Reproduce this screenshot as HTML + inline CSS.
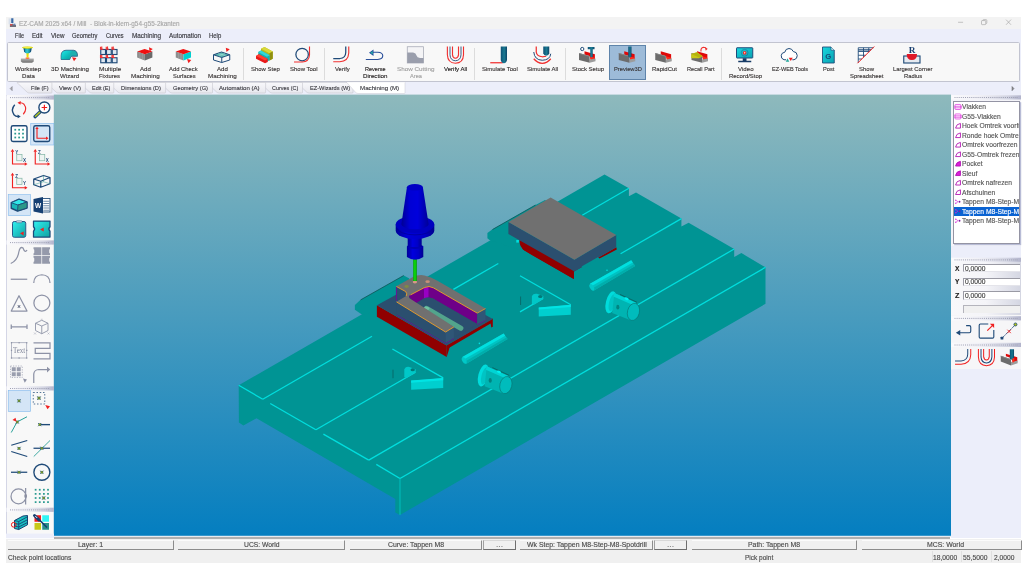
<!DOCTYPE html>
<html lang="en"><head><meta charset="utf-8"><title>EZ-CAM 2025 x64 / Mill - Blok-in-klem-g54-g55-2kanten</title>
<style>
html,body{margin:0;padding:0;background:#fff;}
body{width:1024px;height:576px;overflow:hidden;position:relative;font-family:"Liberation Sans",sans-serif;color:#222;}
#win{position:absolute;left:0;top:0;width:1024px;height:576px;}
.abs{position:absolute;}
.t{position:absolute;white-space:pre;line-height:1;transform-origin:0 50%;-webkit-text-stroke:0.13px currentColor;}
#title{position:absolute;left:6px;top:17px;width:1015px;height:12px;background:#f3f3f3;}
#menu{position:absolute;left:6px;top:29px;width:1015px;height:13px;background:#eceefa;}
#tbbg{position:absolute;left:6px;top:42px;width:1015px;height:40.5px;background:#eceefa;}
#tb{position:absolute;left:6.6px;top:42px;width:1013px;height:40.4px;background:#f8f8f8;border:0.8px solid #c2c4d0;border-radius:1.6px;box-sizing:border-box;}
#tabs{position:absolute;left:6px;top:82px;width:1015px;height:13px;background:#eceefa;}
#left{position:absolute;left:6px;top:95px;width:48px;height:443px;background:#f8f8f8;}
#right{position:absolute;left:951px;top:95px;width:70px;height:443px;background:#eceefa;}
#view{position:absolute;left:54px;top:95px;width:897px;height:440px;background:#eceefa;}
#vsh{position:absolute;left:54px;top:536.9px;width:895.8px;height:1.85px;background:#b0b0b0;}
#vgap{position:absolute;left:54px;top:535.8px;width:897px;height:1.1px;background:#e6eaf0;}
#st1{position:absolute;left:6px;top:538.7px;width:1015px;height:11.3px;background:#f0f0f0;}
#st2{position:absolute;left:6px;top:550px;width:1015px;height:12.5px;background:#f0f0f0;}
#txt{position:absolute;left:0;top:0;width:1024px;height:576px;will-change:transform;}

</style></head>
<body>
<div id="win">
<div id="title"></div>
<div id="menu"></div>
<div id="tbbg"></div>
<div id="tb"></div>
<div id="tabs"></div>
<div id="left"></div>
<div id="right"></div>
<div id="view"></div>
<div id="vgap"></div>
<div id="vsh"></div>
<div id="st1"></div>
<div id="st2"></div>

<svg id="scene" class="abs" style="left:53px;top:94px" width="899" height="443" viewBox="53 94 899 443">
<defs>
<linearGradient id="bgg" gradientUnits="userSpaceOnUse" x1="0" y1="94.6" x2="0" y2="535.8"><stop offset="0" stop-color="#8eb9bc"/><stop offset="1" stop-color="#047ec0"/></linearGradient>
<linearGradient id="blg" x1="0" x2="1" y1="0" y2="0"><stop offset="0" stop-color="#000098"/><stop offset="0.35" stop-color="#0000de"/><stop offset="0.7" stop-color="#0000c8"/><stop offset="1" stop-color="#000090"/></linearGradient>
<linearGradient id="blg2" x1="0" x2="1" y1="0" y2="0"><stop offset="0" stop-color="#000098"/><stop offset="0.3" stop-color="#0000d8"/><stop offset="0.75" stop-color="#0000c4"/><stop offset="1" stop-color="#000090"/></linearGradient>
<linearGradient id="coneg" x1="0" x2="1" y1="0" y2="0"><stop offset="0" stop-color="#000094"/><stop offset="0.3" stop-color="#0000d4"/><stop offset="0.6" stop-color="#0000dc"/><stop offset="1" stop-color="#000098"/></linearGradient>
<linearGradient id="toolg" x1="0" x2="1" y1="0" y2="0"><stop offset="0" stop-color="#00a800"/><stop offset="0.5" stop-color="#10e010"/><stop offset="1" stop-color="#009800"/></linearGradient>
<linearGradient id="rodg" gradientUnits="userSpaceOnUse" x1="0" y1="0" x2="3" y2="5.2" spreadMethod="pad"><stop offset="0" stop-color="#00c4c4"/><stop offset="1" stop-color="#00b0ae"/></linearGradient>
</defs>
<rect x="53.8" y="94.6" width="897.2" height="441.2" fill="url(#bgg)"/>
<polygon points="238.70,385.20 604.50,174.60 628.90,188.30 628.90,196.20 636.00,192.40 681.40,218.60 681.40,226.50 688.60,222.70 734.20,249.00 734.20,256.90 741.40,253.10 765.50,267.30 765.50,303.80 400.00,515.00 395.30,512.40 395.30,499.00 256.50,418.30 243.40,425.60 238.90,422.60" fill="#009494" />
<polygon points="362.20,314.70 354.90,309.80 354.90,305.00 360.30,300.00 403.70,275.50 409.00,278.20 420.00,300.00" fill="#009494" />
<line x1="360.60" y1="299.90" x2="403.70" y2="275.50" stroke="#0a4a4a" stroke-width="0.7" />
<polygon points="489.80,240.20 487.40,238.20 487.40,232.90 492.20,229.60 535.50,205.00 545.00,200.00 560.00,210.00 520.00,250.00" fill="#009494" />
<line x1="492.50" y1="229.50" x2="535.50" y2="205.00" stroke="#0a4a4a" stroke-width="0.7" />
<line x1="238.70" y1="385.20" x2="262.75" y2="399.25" stroke="#00dede" stroke-width="1.3" />
<line x1="270.25" y1="403.50" x2="315.90" y2="429.75" stroke="#00dede" stroke-width="1.3" />
<line x1="323.40" y1="434.10" x2="368.75" y2="460.10" stroke="#00dede" stroke-width="1.3" />
<line x1="376.30" y1="464.40" x2="400.00" y2="478.50" stroke="#00dede" stroke-width="1.3" />
<line x1="400.00" y1="478.50" x2="765.50" y2="267.30" stroke="#00dede" stroke-width="1.3" />
<line x1="400.00" y1="478.50" x2="400.00" y2="515.00" stroke="#00c4c2" stroke-width="0.9" />
<line x1="262.75" y1="399.25" x2="372.00" y2="336.31" stroke="#00dede" stroke-width="1.3" />
<line x1="453.40" y1="289.41" x2="498.30" y2="263.54" stroke="#00dede" stroke-width="1.3" />
<line x1="582.20" y1="215.21" x2="628.90" y2="188.30" stroke="#00dede" stroke-width="1.3" />
<line x1="315.90" y1="429.75" x2="415.50" y2="372.21" stroke="#00dede" stroke-width="1.3" />
<line x1="520.00" y1="311.84" x2="543.00" y2="298.55" stroke="#00dede" stroke-width="1.3" />
<line x1="620.60" y1="253.72" x2="681.40" y2="218.60" stroke="#00dede" stroke-width="1.3" />
<line x1="368.75" y1="460.10" x2="734.20" y2="249.00" stroke="#00dede" stroke-width="1.3" />
<line x1="520.00" y1="275.80" x2="570.80" y2="304.70" stroke="#00dede" stroke-width="1.3" />
<polygon points="538.75,307.40 556.00,306.20 570.80,304.70 570.80,314.80 538.75,316.60" fill="#00cfcf" />
<polygon points="538.75,307.40 570.80,304.70 570.80,307.00 538.75,309.60" fill="#00e4e4" />
<path d="M531.90,304.00 L531.90,296.00 Q533.50,293.00 537.00,293.80 L543.30,296.00 L543.30,299.00 L534.50,304.50 Z" fill="#00c8c8" stroke="none" stroke-width="1" />
<ellipse cx="540.30" cy="296.60" rx="2.2" ry="1.5" fill="#007a78"/>
<line x1="520.60" y1="296.50" x2="520.60" y2="305.00" stroke="#0a5a5a" stroke-width="0.7" />
<polygon points="590.00,283.80 631.20,260.20 635.20,265.90 593.60,290.70" fill="#00c2c2" />
<polygon points="590.00,283.80 631.20,260.20 632.80,262.50 591.40,286.30" fill="#00e0e0" />
<polygon points="592.40,288.60 634.00,264.30 635.20,265.90 593.60,290.70" fill="#00aeac" />
<ellipse cx="591.80" cy="287.30" rx="1.9" ry="3.6" transform="rotate(-30 591.80 287.30)" fill="#00c8c8"/>
<circle cx="607.00" cy="270.20" r="0.8" fill="#00e0e0"/>
<g transform="translate(0.00,0.00)"><ellipse cx="610.94" cy="302.34" rx="5.00" ry="11.25" transform="rotate(14 610.94 302.34)" fill="#00dcdc"/><ellipse cx="612.19" cy="302.81" rx="3.12" ry="8.75" transform="rotate(14 612.19 302.81)" fill="#00c4c4"/><path d="M614.38,293.12 L635.94,302.81 L639.06,311.25 L631.25,320.62 L612.19,313.12 Z" fill="#00b4b2"/><path d="M614.38,293.12 L635.94,302.81 L634.06,305.62 L613.44,296.56 Z" fill="#00d4d4"/><ellipse cx="633.44" cy="311.88" rx="5.94" ry="8.75" transform="rotate(14 633.44 311.88)" fill="#00bcbc" stroke="#0a6a68" stroke-width="0.5"/><path d="M620.00,294.38 L636.88,302.19" stroke="#0a5a58" stroke-width="0.7" fill="none"/><ellipse cx="617.81" cy="307.19" rx="1.56" ry="2.34" fill="#008482"/><ellipse cx="626.56" cy="298.75" rx="2.19" ry="1.25" transform="rotate(24 626.56 298.75)" fill="#00f0f0"/></g>
<line x1="392.40" y1="349.00" x2="443.20" y2="377.90" stroke="#00dede" stroke-width="1.3" />
<polygon points="411.15,380.60 428.40,379.40 443.20,377.90 443.20,388.00 411.15,389.80" fill="#00cfcf" />
<polygon points="411.15,380.60 443.20,377.90 443.20,380.20 411.15,382.80" fill="#00e4e4" />
<path d="M404.30,377.20 L404.30,369.20 Q405.90,366.20 409.40,367.00 L415.70,369.20 L415.70,372.20 L406.90,377.70 Z" fill="#00c8c8" stroke="none" stroke-width="1" />
<ellipse cx="412.70" cy="369.80" rx="2.2" ry="1.5" fill="#007a78"/>
<line x1="393.00" y1="369.70" x2="393.00" y2="378.20" stroke="#0a5a5a" stroke-width="0.7" />
<polygon points="462.40,357.00 503.60,333.40 507.60,339.10 466.00,363.90" fill="#00c2c2" />
<polygon points="462.40,357.00 503.60,333.40 505.20,335.70 463.80,359.50" fill="#00e0e0" />
<polygon points="464.80,361.80 506.40,337.50 507.60,339.10 466.00,363.90" fill="#00aeac" />
<ellipse cx="464.20" cy="360.50" rx="1.9" ry="3.6" transform="rotate(-30 464.20 360.50)" fill="#00c8c8"/>
<circle cx="479.40" cy="343.40" r="0.8" fill="#00e0e0"/>
<g transform="translate(-127.60,73.20)"><ellipse cx="610.94" cy="302.34" rx="5.00" ry="11.25" transform="rotate(14 610.94 302.34)" fill="#00dcdc"/><ellipse cx="612.19" cy="302.81" rx="3.12" ry="8.75" transform="rotate(14 612.19 302.81)" fill="#00c4c4"/><path d="M614.38,293.12 L635.94,302.81 L639.06,311.25 L631.25,320.62 L612.19,313.12 Z" fill="#00b4b2"/><path d="M614.38,293.12 L635.94,302.81 L634.06,305.62 L613.44,296.56 Z" fill="#00d4d4"/><ellipse cx="633.44" cy="311.88" rx="5.94" ry="8.75" transform="rotate(14 633.44 311.88)" fill="#00bcbc" stroke="#0a6a68" stroke-width="0.5"/><path d="M620.00,294.38 L636.88,302.19" stroke="#0a5a58" stroke-width="0.7" fill="none"/><ellipse cx="617.81" cy="307.19" rx="1.56" ry="2.34" fill="#008482"/><ellipse cx="626.56" cy="298.75" rx="2.19" ry="1.25" transform="rotate(24 626.56 298.75)" fill="#00f0f0"/></g>
<polygon points="520.00,241.20 573.80,271.60 616.30,247.20 616.80,249.50 599.50,258.60 598.00,257.20 581.50,266.50 573.80,271.20 573.80,279.00 531.00,254.50 523.00,249.50" fill="#900000" />
<path d="M519.6,240 Q518.8,246.5 524.5,250.5 L573.8,279 L573.8,268 Z" fill="#900000" stroke="none" stroke-width="1" />
<polygon points="508.40,221.90 574.40,259.70 616.25,235.00 616.25,247.20 574.40,271.40 508.40,233.90" fill="#2b4f6f" />
<polygon points="550.60,197.50 616.25,235.00 574.40,259.70 508.40,221.90" fill="#707070" />
<polygon points="581.50,266.60 598.20,257.00 598.20,259.50 584.00,268.00" fill="#009494" />
<rect x="516.3" y="240" width="2.6" height="2.6" fill="#00e0e0"/>
<polygon points="376.90,305.30 446.70,345.60 446.70,357.00 376.90,316.80" fill="#900000" />
<polygon points="446.70,345.20 492.80,318.60 492.80,326.80 491.30,327.40 490.60,323.40 446.70,349.20" fill="#900000" />
<polygon points="446.70,345.60 450.00,343.70 450.00,346.20 446.70,357.00" fill="#900000" />
<polygon points="376.90,305.30 396.50,294.50 440.00,290.00 492.80,319.00 446.70,345.60" fill="#2b4f6f" />
<line x1="397.00" y1="315.20" x2="445.60" y2="343.20" stroke="#7a00a0" stroke-width="0.8" />
<line x1="445.60" y1="343.20" x2="453.80" y2="338.40" stroke="#7a00a0" stroke-width="0.8" />
<line x1="477.20" y1="324.60" x2="485.50" y2="320.00" stroke="#7a00a0" stroke-width="0.8" />
<polygon points="396.25,286.25 421.00,290.00 421.00,302.00 396.25,302.30" fill="#2b4f6f" />
<polygon points="408.50,295.50 425.20,286.25 432.20,287.00 477.20,313.00 477.20,324.20 453.90,337.50 453.90,326.60" fill="#2b4f6f" />
<polygon points="427.00,286.40 432.20,287.00 477.20,313.00 477.20,324.00 432.50,298.20 427.00,297.20" fill="#6e0088" />
<path d="M423.5,288.2 Q425.5,286 428.5,286.6 L428.5,297.6 Q425.5,297.2 423.5,299 Z" fill="#9800c4" stroke="none" stroke-width="1" />
<polygon points="408.50,295.50 424.00,287.20 424.00,298.60 414.50,304.20" fill="#6e0088" />
<polygon points="414.50,304.20 424.00,298.60 428.50,297.60 432.50,298.20 477.20,324.00 477.20,324.20 453.90,337.50 453.90,326.80" fill="#2b4f6f" />
<line x1="426.6" y1="308.6" x2="460.8" y2="328.2" stroke="#52a48c" stroke-width="5.2" stroke-linecap="round"/>
<ellipse cx="426.8" cy="308.2" rx="2.8" ry="1.6" transform="rotate(12 426.8 308.2)" fill="#6fc2a4"/>
<polygon points="396.50,301.80 445.60,331.90 445.60,343.00 396.50,314.60" fill="#2b4f6f" />
<polygon points="445.60,331.90 453.90,326.80 453.90,338.00 445.60,343.00" fill="#2f5677" />
<polygon points="477.20,313.00 485.50,308.50 485.50,319.80 477.20,324.20" fill="#2f5677" />
<path d="M396.25,286.3 L412.5,277.3 Q418.5,274.2 424.5,275.4 Q431,276.6 437,280.6 L485.5,308.5 L477.2,313.0 L433.5,287.8 Q429,285.2 424.5,287.4 L410.5,294.8 Q408,296.4 409.5,298.2 L453.9,326.8 L445.6,331.9 L396.5,301.8 L406.2,296.0 Q407.6,293.8 405.6,291.5 Z" fill="#707070" stroke="none" stroke-width="1" />
<path d="M396.5,301.9 L445.6,332 L453.9,326.9" fill="none" stroke="#f0a028" stroke-width="0.9" />
<path d="M477.2,313.1 L433.5,287.9 Q429,285.3 424.5,287.5 L410.5,294.9" fill="none" stroke="#f0a028" stroke-width="0.9" />
<path d="M396.4,286.5 L405.6,291.5 Q407.6,293.8 406.2,296.0" fill="none" stroke="#f0a028" stroke-width="0.9" />
<line x1="396.40" y1="287.00" x2="396.40" y2="300.60" stroke="#7a00a0" stroke-width="0.8" />
<path d="M477.2,313.1 L485.5,308.6" fill="none" stroke="#f0a028" stroke-width="0.8" />
<ellipse cx="406.6" cy="286.5" rx="2.2" ry="1.4" fill="#7f8a46"/>
<ellipse cx="414.9" cy="282.1" rx="2.2" ry="1.4" fill="#d89a84"/>
<ellipse cx="427.6" cy="281.7" rx="2.2" ry="1.4" fill="#c89078"/>
<rect x="413.2" y="258" width="3.6" height="23" fill="url(#toolg)"/>
<path d="M406.9,246.5 L423.3,246.5 L423.3,257 Q415.1,262.5 406.9,257 Z" fill="url(#blg)"/>
<ellipse cx="415.1" cy="246.6" rx="8.2" ry="2.4" fill="#0000b4"/>
<rect x="407.7" y="236" width="14" height="11" fill="url(#blg)"/>
<path d="M395.7,224.5 L395.7,230.5 A19.3,8.6 0 0 0 434.3,230.5 L434.3,224.5 Z" fill="url(#blg2)"/>
<ellipse cx="415" cy="224.5" rx="19.3" ry="8.6" fill="#0000c0"/>
<path d="M396.2,228.2 A19.2,8.4 0 0 0 433.8,228.2" fill="none" stroke="#000098" stroke-width="0.8"/>
<path d="M406.9,187.4 L401.4,224 A13.6,5.2 0 0 0 428.6,224 L422.9,187.4 Z" fill="url(#coneg)"/>
<ellipse cx="414.9" cy="187.3" rx="8" ry="3.3" fill="#0000c4"/>
</svg>
<div class="abs" style="left:951.30px;top:95.00px;width:69.70px;height:151.00px;background:#f4f4f9;"></div>
<div class="abs" style="left:951.30px;top:257.50px;width:69.70px;height:111.00px;background:#f6f6f8;"></div>
<div class="abs" style="left:951.30px;top:262.00px;width:69.70px;height:53.00px;background:linear-gradient(90deg,#f8f8fa 0%,#f4f4f8 50%,#d4d6e2 100%);"></div>
<div class="abs" style="left:953.20px;top:101.20px;width:66.40px;height:142.60px;background:#fff;border:0.7px solid #9494a4;box-sizing:border-box;box-shadow:1.2px 1.2px 0 #b8bcd6;"></div>
<div class="abs" style="left:954.00px;top:206.90px;width:64.80px;height:9.40px;background:#0a63d2;"></div>
<div class="abs" style="left:962.60px;top:264.00px;width:57.60px;height:8.40px;background:#fff;border-top:0.7px solid #9a9aa4;border-left:0.7px solid #9a9aa4;border-bottom:0.5px solid #e4e4ea;box-sizing:border-box;"></div>
<div class="abs" style="left:962.60px;top:277.60px;width:57.60px;height:8.40px;background:#fff;border-top:0.7px solid #9a9aa4;border-left:0.7px solid #9a9aa4;border-bottom:0.5px solid #e4e4ea;box-sizing:border-box;"></div>
<div class="abs" style="left:962.60px;top:291.40px;width:57.60px;height:8.40px;background:#fff;border-top:0.7px solid #9a9aa4;border-left:0.7px solid #9a9aa4;border-bottom:0.5px solid #e4e4ea;box-sizing:border-box;"></div>
<div class="abs" style="left:962.60px;top:304.70px;width:57.60px;height:8.40px;background:#f0f0f0;border-top:0.8px solid #b4b4bc;border-left:0.8px solid #b4b4bc;box-sizing:border-box;"></div>
<svg class="abs" style="left:0;top:0" width="1024" height="576" viewBox="0 0 1024 576">
<defs>
<linearGradient id="gGrip2" x1="0" x2="1" y1="0" y2="0"><stop offset="0" stop-color="#fbfbfd"/><stop offset="0.4" stop-color="#f0f0f6"/><stop offset="0.8" stop-color="#d2d4e2"/><stop offset="1" stop-color="#b2b4cc"/></linearGradient>
<linearGradient id="gTool2" x1="0" x2="1" y1="0" y2="0"><stop offset="0" stop-color="#0d4f74"/><stop offset="0.55" stop-color="#1a7a92"/><stop offset="1" stop-color="#0b4468"/></linearGradient>
</defs>
<rect x="951.3" y="95.3" width="69.70000000000005" height="4.2" fill="url(#gGrip2)"/>
<line x1="954.5" y1="97.5" x2="1018" y2="97.5" stroke="#9496aa" stroke-width="0.9" stroke-dasharray="1 1.1"/>
<rect x="951.3" y="257.7" width="69.70000000000005" height="4.2" fill="url(#gGrip2)"/>
<line x1="954.5" y1="259.9" x2="1018" y2="259.9" stroke="#9496aa" stroke-width="0.9" stroke-dasharray="1 1.1"/>
<rect x="951.3" y="316.2" width="69.70000000000005" height="4.2" fill="url(#gGrip2)"/>
<line x1="954.5" y1="318.4" x2="1018" y2="318.4" stroke="#9496aa" stroke-width="0.9" stroke-dasharray="1 1.1"/>
<rect x="951.3" y="342.8" width="69.70000000000005" height="4.2" fill="url(#gGrip2)"/>
<line x1="954.5" y1="345" x2="1018" y2="345" stroke="#9496aa" stroke-width="0.9" stroke-dasharray="1 1.1"/>
<g transform="translate(928,90) scale(0.1875)"><rect x="144" y="77.0" width="31" height="27" rx="4" fill="#fff0ff" stroke="#d820d8" stroke-width="3.4"/><path d="M140,87.0 L182,87.0 M140,95.0 L182,95.0" stroke="#d820d8" stroke-width="3"/><rect x="144" y="127.6" width="31" height="27" rx="4" fill="#fff0ff" stroke="#d820d8" stroke-width="3.4"/><path d="M140,137.6 L182,137.6 M140,145.6 L182,145.6" stroke="#d820d8" stroke-width="3"/><path d="M147,203.2 Q150,181.2 173,178.2 L173,203.2 Z" fill="#fff" stroke="#b010b0" stroke-width="4.6" stroke-linejoin="round"/><path d="M147,253.8 Q150,231.8 173,228.8 L173,253.8 Z" fill="#fff" stroke="#b010b0" stroke-width="4.6" stroke-linejoin="round"/><path d="M147,304.4 Q150,282.4 173,279.4 L173,304.4 Z" fill="#fff" stroke="#b010b0" stroke-width="4.6" stroke-linejoin="round"/><path d="M147,355.0 Q150,333.0 173,330.0 L173,355.0 Z" fill="#fff" stroke="#b010b0" stroke-width="4.6" stroke-linejoin="round"/><path d="M147,506.8 Q150,484.8 173,481.8 L173,506.8 Z" fill="#fff" stroke="#b010b0" stroke-width="4.6" stroke-linejoin="round"/><path d="M147,557.4000000000001 Q150,535.4000000000001 173,532.4000000000001 L173,557.4000000000001 Z" fill="#fff" stroke="#b010b0" stroke-width="4.6" stroke-linejoin="round"/><path d="M147,405.6 Q150,383.6 173,380.6 L173,405.6 Z" fill="#d820d8" stroke="#b010b0" stroke-width="4.6" stroke-linejoin="round"/><path d="M147,456.2 Q150,434.2 173,431.2 L173,456.2 Z" fill="#d820d8" stroke="#b010b0" stroke-width="4.6" stroke-linejoin="round"/><circle cx="148" cy="588.0" r="3.5" fill="#d820d8"/><circle cx="148" cy="604.0" r="3.5" fill="#d820d8"/><path d="M150,589.0 L160,596.0 L150,603.0" fill="none" stroke="#d820d8" stroke-width="3"/><circle cx="168" cy="596.0" r="5" fill="#8018a0"/><circle cx="148" cy="638.6" r="3.5" fill="#d820d8"/><circle cx="148" cy="654.6" r="3.5" fill="#d820d8"/><path d="M150,639.6 L160,646.6 L150,653.6" fill="none" stroke="#d820d8" stroke-width="3"/><circle cx="168" cy="646.6" r="5" fill="#8018a0"/><circle cx="148" cy="689.2" r="3.5" fill="#d820d8"/><circle cx="148" cy="705.2" r="3.5" fill="#d820d8"/><path d="M150,690.2 L160,697.2 L150,704.2" fill="none" stroke="#d820d8" stroke-width="3"/><circle cx="168" cy="697.2" r="5" fill="#8018a0"/></g>
<g transform="translate(948,314) scale(0.10066438494060802)"><path d="M180,116 L212,116 Q226,116 226,130 L226,172 Q226,186 212,186 L118,186" fill="none" stroke="#1f4a78" stroke-width="11"/><path d="M78,186 L122,158 L122,214 Z" fill="#1f4a78"/><path d="M400,100 L322,100 Q310,100 310,112 L310,228 Q310,240 322,240 L443,240 Q455,240 455,228 L455,160" fill="none" stroke="#1f4a78" stroke-width="11"/><path d="M390,166 L446,110" stroke="#f02020" stroke-width="11"/><path d="M416,98 L458,98 L458,140 Z" fill="#f02020"/><path d="M536,240 L668,108" stroke="#1f4a78" stroke-width="8" stroke-dasharray="40 8"/><rect x="522" y="226" width="28" height="28" rx="6" fill="#1f4a78"/><circle cx="670" cy="104" r="15" fill="#b8c818" stroke="#1f4a78" stroke-width="8"/><path d="M590,156 L624,190 M624,156 L590,190" stroke="#f02020" stroke-width="9"/><path d="M196,348 L196,400 Q194,462 130,466 L70,466" fill="none" stroke="#1f4a78" stroke-width="10"/><path d="M226,348 L226,404 Q222,494 130,498 L70,498" fill="none" stroke="#f02020" stroke-width="10"/><path d="M302,348 L302,428 Q306,512 382,514 Q458,512 462,428 L462,348" fill="none" stroke="#f02020" stroke-width="10"/><path d="M328,348 L328,426 Q332,484 382,486 Q432,484 436,426 L436,348" fill="none" stroke="#1f4a78" stroke-width="10"/><path d="M354,348 L354,424 Q358,456 382,458 Q406,456 410,424 L410,348" fill="none" stroke="#f02020" stroke-width="10"/><path d="M575,394 L688,430 L688,472 L642,484 L634,440 L575,420 Z" fill="#e00808"/><path d="M625,478 L692,462 L692,490 L625,512 Z" fill="#9c9c9c"/><path d="M614,350 L656,350 L656,446 Q635,462 614,446 Z" fill="url(#gTool2)"/><path d="M524,414 L626,450 L626,512 L524,472 Z" fill="#6c6c6c"/><path d="M524,414 L626,450 L626,458 L524,422 Z" fill="#8a8a8a"/><path d="M640,440 L660,436 L660,474 L642,484 Z" fill="#ff2a1a"/></g>
<rect x="8.6" y="18.4" width="2.6" height="5.8" fill="#d2dcea" opacity="0.8"/><path d="M11.2,18.2 L13.4,18.2 L13.4,22.2 L12.3,23.6 L11.2,22.2 Z" fill="#3868a6"/><path d="M9.9,24.2 L12.6,24.0 L16.0,25.0 L16.0,26.9 L9.9,26.9 Z" fill="#6e707c"/><rect x="10.1" y="24.0" width="2.2" height="1.5" fill="#d84848"/><rect x="13.6" y="23.6" width="1.8" height="1.5" fill="#6a86b8"/>
<g transform="translate(944,14) scale(0.078125)"><path d="M180,106 L244,106" stroke="#a2a2a2" stroke-width="8"/><rect x="480" y="84" width="54" height="52" rx="8" fill="none" stroke="#a2a2a2" stroke-width="8"/><path d="M496,82 Q498,72 508,72 L538,72 Q548,72 548,82 L548,112 Q548,122 538,124" fill="none" stroke="#a2a2a2" stroke-width="8"/><path d="M794,72 L858,138 M858,72 L794,138" stroke="#a2a2a2" stroke-width="8"/></g>
</svg>
<div class="abs" style="left:608.75px;top:45.25px;width:37.50px;height:35.00px;background:#9dbbd8;border:0.6px solid #5f84aa;box-sizing:border-box;"></div>
<div class="abs" style="left:243.20px;top:47.50px;width:0.80px;height:32.00px;background:#dcdcdc;"></div>
<div class="abs" style="left:323.60px;top:47.50px;width:0.80px;height:32.00px;background:#dcdcdc;"></div>
<div class="abs" style="left:474.00px;top:47.50px;width:0.80px;height:32.00px;background:#dcdcdc;"></div>
<div class="abs" style="left:564.85px;top:47.50px;width:0.80px;height:32.00px;background:#dcdcdc;"></div>
<div class="abs" style="left:720.85px;top:47.50px;width:0.80px;height:32.00px;background:#dcdcdc;"></div>
<div class="abs" style="left:8.00px;top:539.60px;width:165.70px;height:10.10px;background:#f0f0f0;border-right:0.9px solid #8c8c8c;border-bottom:0.9px solid #8c8c8c;border-top:0.5px solid #fbfbfb;box-sizing:border-box;"></div>
<div class="abs" style="left:177.50px;top:539.60px;width:167.10px;height:10.10px;background:#f0f0f0;border-right:0.9px solid #8c8c8c;border-bottom:0.9px solid #8c8c8c;border-top:0.5px solid #fbfbfb;box-sizing:border-box;"></div>
<div class="abs" style="left:349.80px;top:539.60px;width:132.50px;height:10.10px;background:#f0f0f0;border-right:0.9px solid #8c8c8c;border-bottom:0.9px solid #8c8c8c;border-top:0.5px solid #fbfbfb;box-sizing:border-box;"></div>
<div class="abs" style="left:482.80px;top:539.80px;width:32.80px;height:9.80px;background:#f0f0f0;border-right:1px solid #6e6e6e;border-bottom:1px solid #6e6e6e;border-top:0.6px solid #d8d8d8;border-left:0.6px solid #a0a0a0;box-sizing:border-box;"></div>
<div class="abs" style="left:520.30px;top:539.60px;width:133.00px;height:10.10px;background:#f0f0f0;border-right:0.9px solid #8c8c8c;border-bottom:0.9px solid #8c8c8c;border-top:0.5px solid #fbfbfb;box-sizing:border-box;"></div>
<div class="abs" style="left:653.50px;top:539.80px;width:33.50px;height:9.80px;background:#f0f0f0;border-right:1px solid #6e6e6e;border-bottom:1px solid #6e6e6e;border-top:0.6px solid #d8d8d8;border-left:0.6px solid #a0a0a0;box-sizing:border-box;"></div>
<div class="abs" style="left:691.90px;top:539.60px;width:165.50px;height:10.10px;background:#f0f0f0;border-right:0.9px solid #8c8c8c;border-bottom:0.9px solid #8c8c8c;border-top:0.5px solid #fbfbfb;box-sizing:border-box;"></div>
<div class="abs" style="left:862.40px;top:539.60px;width:159.60px;height:10.10px;background:#f0f0f0;border-right:0.9px solid #8c8c8c;border-bottom:0.9px solid #8c8c8c;border-top:0.5px solid #fbfbfb;box-sizing:border-box;"></div>
<div class="abs" style="left:931.60px;top:550.50px;width:0.70px;height:11.50px;background:#e0e0e0;"></div>
<div class="abs" style="left:961.30px;top:550.50px;width:0.70px;height:11.50px;background:#e0e0e0;"></div>
<div class="abs" style="left:991.30px;top:550.50px;width:0.70px;height:11.50px;background:#e0e0e0;"></div>
<svg class="abs" style="left:0;top:82px" width="1024" height="14" viewBox="0 82 1024 14">
<defs><linearGradient id="gTab" x1="0" x2="0" y1="0" y2="1"><stop offset="0" stop-color="#f8f8fb"/><stop offset="1" stop-color="#e8e8ee"/></linearGradient></defs>
<path d="M296.50,82.5 L306.80,92.2 Q307.70,93.0 309.10,93.0 L352.40,93.0 Q353.00,93.0 353.00,92.4 L353.00,82.5 Z" fill="url(#gTab)" stroke="#c4c4cc" stroke-width="0.55" stroke-linejoin="round"/>
<path d="M259.60,82.5 L269.90,92.2 Q270.80,93.0 272.20,93.0 L301.90,93.0 Q302.50,93.0 302.50,92.4 L302.50,82.5 Z" fill="url(#gTab)" stroke="#c4c4cc" stroke-width="0.55" stroke-linejoin="round"/>
<path d="M206.50,82.5 L216.80,92.2 Q217.70,93.0 219.10,93.0 L265.00,93.0 Q265.60,93.0 265.60,92.4 L265.60,82.5 Z" fill="url(#gTab)" stroke="#c4c4cc" stroke-width="0.55" stroke-linejoin="round"/>
<path d="M159.60,82.5 L169.90,92.2 Q170.80,93.0 172.20,93.0 L211.90,93.0 Q212.50,93.0 212.50,92.4 L212.50,82.5 Z" fill="url(#gTab)" stroke="#c4c4cc" stroke-width="0.55" stroke-linejoin="round"/>
<path d="M107.75,82.5 L118.05,92.2 Q118.95,93.0 120.35,93.0 L165.00,93.0 Q165.60,93.0 165.60,92.4 L165.60,82.5 Z" fill="url(#gTab)" stroke="#c4c4cc" stroke-width="0.55" stroke-linejoin="round"/>
<path d="M79.40,82.5 L89.70,92.2 Q90.60,93.0 92.00,93.0 L113.15,93.0 Q113.75,93.0 113.75,92.4 L113.75,82.5 Z" fill="url(#gTab)" stroke="#c4c4cc" stroke-width="0.55" stroke-linejoin="round"/>
<path d="M45.90,82.5 L56.20,92.2 Q57.10,93.0 58.50,93.0 L84.80,93.0 Q85.40,93.0 85.40,92.4 L85.40,82.5 Z" fill="url(#gTab)" stroke="#c4c4cc" stroke-width="0.55" stroke-linejoin="round"/>
<path d="M16.90,82.5 L27.20,92.2 Q28.10,93.0 29.50,93.0 L51.30,93.0 Q51.90,93.0 51.90,92.4 L51.90,82.5 Z" fill="url(#gTab)" stroke="#c4c4cc" stroke-width="0.55" stroke-linejoin="round"/>
<path d="M346.50,82.2 L355.60,92.4 Q356.70,93.5 358.10,93.5 L404.40,93.5 Q405.00,93.5 405.00,92.9 L405.00,82.2 Z" fill="#ffffff" stroke="#c8c8d0" stroke-width="0.5" stroke-linejoin="round"/>
<rect x="347.10" y="81.6" width="57.70" height="1.2" fill="#fdfdfe"/>
<path d="M12.2,86.5 L10.1,88.6 L12.2,90.7 Z" fill="#a8a8ac" stroke="#707078" stroke-width="0.45"/>
<path d="M1012.0,86.5 L1014.0,88.6 L1012.0,90.7 Z" fill="#909094" stroke="#505056" stroke-width="0.45"/>
</svg>
<div id="txt">
<span class="t" style="left:18.75px;top:21px;font-size:6.5px;transform:scaleX(0.9838);color:#a6a6a6;">EZ-CAM 2025 x64 / Mill  - Blok-in-klem-g54-g55-2kanten</span>
<span class="t" style="left:14.75px;top:33px;font-size:6.3px;transform:scaleX(0.8862);color:#34343a;">File</span>
<span class="t" style="left:32.25px;top:33px;font-size:6.3px;transform:scaleX(0.9669);color:#34343a;">Edit</span>
<span class="t" style="left:50.60px;top:33px;font-size:6.3px;transform:scaleX(0.9892);color:#34343a;">View</span>
<span class="t" style="left:72.25px;top:33px;font-size:6.3px;transform:scaleX(0.9220);color:#34343a;">Geometry</span>
<span class="t" style="left:106.00px;top:33px;font-size:6.3px;transform:scaleX(0.8821);color:#34343a;">Curves</span>
<span class="t" style="left:131.90px;top:33px;font-size:6.3px;transform:scaleX(1.0103);color:#34343a;">Machining</span>
<span class="t" style="left:169.10px;top:33px;font-size:6.3px;transform:scaleX(1.0013);color:#34343a;">Automation</span>
<span class="t" style="left:209.00px;top:33px;font-size:6.3px;transform:scaleX(0.9457);color:#34343a;">Help</span>
<span class="t" style="left:14.75px;top:66px;font-size:6.2px;transform:scaleX(1.0084);color:#383434;">Workstep</span>
<span class="t" style="left:21.50px;top:73px;font-size:6.2px;transform:scaleX(0.9864);color:#383434;">Data</span>
<span class="t" style="left:51.00px;top:66px;font-size:6.2px;transform:scaleX(1.0041);color:#383434;">3D Machining</span>
<span class="t" style="left:60.25px;top:73px;font-size:6.2px;transform:scaleX(0.9940);color:#383434;">Wizard</span>
<span class="t" style="left:98.75px;top:66px;font-size:6.2px;transform:scaleX(1.0432);color:#383434;">Multiple</span>
<span class="t" style="left:99.40px;top:73px;font-size:6.2px;transform:scaleX(0.9471);color:#383434;">Fixtures</span>
<span class="t" style="left:139.75px;top:66px;font-size:6.2px;transform:scaleX(0.9850);color:#383434;">Add</span>
<span class="t" style="left:131.00px;top:73px;font-size:6.2px;transform:scaleX(1.0188);color:#383434;">Machining</span>
<span class="t" style="left:169.40px;top:66px;font-size:6.2px;transform:scaleX(0.9478);color:#383434;">Add Check</span>
<span class="t" style="left:172.50px;top:73px;font-size:6.2px;transform:scaleX(0.9213);color:#383434;">Surfaces</span>
<span class="t" style="left:216.90px;top:66px;font-size:6.2px;transform:scaleX(0.9850);color:#383434;">Add</span>
<span class="t" style="left:208.10px;top:73px;font-size:6.2px;transform:scaleX(1.0206);color:#383434;">Machining</span>
<span class="t" style="left:251.00px;top:66px;font-size:6.2px;transform:scaleX(0.9603);color:#383434;">Show Step</span>
<span class="t" style="left:289.75px;top:66px;font-size:6.2px;transform:scaleX(0.9670);color:#383434;">Show Tool</span>
<span class="t" style="left:335.00px;top:66px;font-size:6.2px;transform:scaleX(0.9526);color:#383434;">Verify</span>
<span class="t" style="left:365.00px;top:66px;font-size:6.2px;transform:scaleX(0.8938);color:#242020;">Reverse</span>
<span class="t" style="left:363.10px;top:73px;font-size:6.2px;transform:scaleX(0.9991);color:#242020;">Direction</span>
<span class="t" style="left:444.40px;top:66px;font-size:6.2px;transform:scaleX(0.9733);color:#242020;">Verify All</span>
<span class="t" style="left:481.50px;top:66px;font-size:6.2px;transform:scaleX(0.9654);color:#383434;">Simulate Tool</span>
<span class="t" style="left:527.25px;top:66px;font-size:6.2px;transform:scaleX(0.9667);color:#383434;">Simulate All</span>
<span class="t" style="left:572.25px;top:66px;font-size:6.2px;transform:scaleX(0.9633);color:#383434;">Stock Setup</span>
<span class="t" style="left:614.00px;top:66px;font-size:6.2px;transform:scaleX(0.9324);color:#383434;">Preview3D</span>
<span class="t" style="left:651.90px;top:66px;font-size:6.2px;transform:scaleX(0.9691);color:#383434;">RapidCut</span>
<span class="t" style="left:686.90px;top:66px;font-size:6.2px;transform:scaleX(0.9086);color:#383434;">Recall Part</span>
<span class="t" style="left:737.50px;top:66px;font-size:6.2px;transform:scaleX(0.9924);color:#383434;">Video</span>
<span class="t" style="left:728.75px;top:73px;font-size:6.2px;transform:scaleX(0.9635);color:#383434;">Record/Stop</span>
<span class="t" style="left:771.90px;top:66px;font-size:6.2px;transform:scaleX(0.8972);color:#383434;">EZ-WEB Tools</span>
<span class="t" style="left:823.10px;top:66px;font-size:6.2px;transform:scaleX(0.9120);color:#383434;">Post</span>
<span class="t" style="left:859.00px;top:66px;font-size:6.2px;transform:scaleX(0.9687);color:#383434;">Show</span>
<span class="t" style="left:849.75px;top:73px;font-size:6.2px;transform:scaleX(0.9503);color:#383434;">Spreadsheet</span>
<span class="t" style="left:893.10px;top:66px;font-size:6.2px;transform:scaleX(0.9544);color:#383434;">Largest Corner</span>
<span class="t" style="left:903.75px;top:73px;font-size:6.2px;transform:scaleX(0.9421);color:#383434;">Radius</span>
<span class="t" style="left:397.25px;top:66px;font-size:6.2px;transform:scaleX(1.0187);color:#a2a2a2;">Show Cutting</span>
<span class="t" style="left:410.00px;top:73px;font-size:6.2px;transform:scaleX(0.9099);color:#a2a2a2;">Area</span>
<span class="t" style="left:31.00px;top:85px;font-size:6.2px;transform:scaleX(0.8931);color:#3a3a40;">File (F)</span>
<span class="t" style="left:59.00px;top:85px;font-size:6.2px;transform:scaleX(0.9450);color:#3a3a40;">View (V)</span>
<span class="t" style="left:91.60px;top:85px;font-size:6.2px;transform:scaleX(0.8914);color:#3a3a40;">Edit (E)</span>
<span class="t" style="left:121.00px;top:85px;font-size:6.2px;transform:scaleX(0.9381);color:#3a3a40;">Dimensions (D)</span>
<span class="t" style="left:173.00px;top:85px;font-size:6.2px;transform:scaleX(0.9252);color:#3a3a40;">Geometry (G)</span>
<span class="t" style="left:219.40px;top:85px;font-size:6.2px;transform:scaleX(0.9835);color:#3a3a40;">Automation (A)</span>
<span class="t" style="left:271.90px;top:85px;font-size:6.2px;transform:scaleX(0.8756);color:#3a3a40;">Curves (C)</span>
<span class="t" style="left:309.75px;top:85px;font-size:6.2px;transform:scaleX(0.9148);color:#3a3a40;">EZ-Wizards (W)</span>
<span class="t" style="left:360.25px;top:85px;font-size:6.2px;transform:scaleX(0.9986);color:#3a3a40;">Machining (M)</span>
<span class="t" style="left:78.25px;top:542px;font-size:6.6px;transform:scaleX(1.0555);color:#4a4a4a;">Layer: 1</span>
<span class="t" style="left:243.80px;top:542px;font-size:6.6px;transform:scaleX(1.0263);color:#4a4a4a;">UCS: World</span>
<span class="t" style="left:387.80px;top:542px;font-size:6.6px;transform:scaleX(1.0453);color:#4a4a4a;">Curve: Tappen M8</span>
<span class="t" style="left:495.50px;top:542px;font-size:6.6px;transform:scaleX(1.2727);color:#666;">...</span>
<span class="t" style="left:526.80px;top:542px;font-size:6.6px;transform:scaleX(1.0480);color:#4a4a4a;">Wk Step: Tappen M8-Step-M8-Spotdrill</span>
<span class="t" style="left:667.00px;top:542px;font-size:6.6px;transform:scaleX(1.2727);color:#666;">...</span>
<span class="t" style="left:747.50px;top:542px;font-size:6.6px;transform:scaleX(1.0456);color:#4a4a4a;">Path: Tappen M8</span>
<span class="t" style="left:926.60px;top:542px;font-size:6.6px;transform:scaleX(1.0446);color:#4a4a4a;">MCS: World</span>
<span class="t" style="left:8.10px;top:555px;font-size:6.6px;transform:scaleX(1.0114);color:#4a4a4a;">Check point locations</span>
<span class="t" style="left:744.80px;top:555px;font-size:6.6px;transform:scaleX(0.9862);color:#4a4a4a;">Pick point</span>
<span class="t" style="left:933.40px;top:555px;font-size:6.6px;transform:scaleX(1.0149);color:#4a4a4a;">18,0000</span>
<span class="t" style="left:963.40px;top:555px;font-size:6.6px;transform:scaleX(1.0233);color:#4a4a4a;">55,5000</span>
<span class="t" style="left:993.60px;top:555px;font-size:6.6px;transform:scaleX(1.0113);color:#4a4a4a;">2,0000</span>
<span class="t" style="left:954.80px;top:266px;font-size:6.6px;transform:scaleX(0.9986);color:#222;font-weight:bold;">X</span>
<span class="t" style="left:964.60px;top:266px;font-size:6.6px;transform:scaleX(1.0113);color:#3c3c3c;">0,0000</span>
<span class="t" style="left:954.80px;top:279px;font-size:6.6px;transform:scaleX(0.9986);color:#222;font-weight:bold;">Y</span>
<span class="t" style="left:964.60px;top:279px;font-size:6.6px;transform:scaleX(1.0113);color:#3c3c3c;">0,0000</span>
<span class="t" style="left:954.80px;top:293px;font-size:6.6px;transform:scaleX(1.0915);color:#222;font-weight:bold;">Z</span>
<span class="t" style="left:964.60px;top:293px;font-size:6.6px;transform:scaleX(1.0113);color:#3c3c3c;">0,0000</span>
<div class="abs" id="lst" style="left:954px;top:102px;width:64.8px;height:141px;overflow:hidden;">
<span class="t" style="left:8.1px;top:2px;font-size:6.6px;transform:scaleX(1.0180);color:#555;">Vlakken</span>
<span class="t" style="left:8.1px;top:12px;font-size:6.6px;transform:scaleX(1.0180);color:#555;">G55-Vlakken</span>
<span class="t" style="left:8.1px;top:21px;font-size:6.6px;transform:scaleX(1.0180);color:#555;">Hoek Omtrek voorfrezen</span>
<span class="t" style="left:8.1px;top:31px;font-size:6.6px;transform:scaleX(1.0180);color:#555;">Ronde hoek Omtrek</span>
<span class="t" style="left:8.1px;top:40px;font-size:6.6px;transform:scaleX(1.0180);color:#555;">Omtrek voorfrezen</span>
<span class="t" style="left:8.1px;top:50px;font-size:6.6px;transform:scaleX(1.0180);color:#555;">G55-Omtrek frezen</span>
<span class="t" style="left:8.1px;top:59px;font-size:6.6px;transform:scaleX(1.0180);color:#555;">Pocket</span>
<span class="t" style="left:8.1px;top:69px;font-size:6.6px;transform:scaleX(1.0180);color:#555;">Sleuf</span>
<span class="t" style="left:8.1px;top:78px;font-size:6.6px;transform:scaleX(1.0180);color:#555;">Omtrek nafrezen</span>
<span class="t" style="left:8.1px;top:88px;font-size:6.6px;transform:scaleX(1.0180);color:#555;">Afschuinen</span>
<span class="t" style="left:8.1px;top:97px;font-size:6.6px;transform:scaleX(1.0180);color:#555;">Tappen M8-Step-M8</span>
<span class="t" style="left:8.1px;top:107px;font-size:6.6px;transform:scaleX(1.0180);color:#fff;">Tappen M8-Step-M8</span>
<span class="t" style="left:8.1px;top:116px;font-size:6.6px;transform:scaleX(1.0180);color:#555;">Tappen M8-Step-M8</span>
</div>
</div>
<svg class="abs" style="left:0;top:0" width="1024" height="576" viewBox="0 0 1024 576">
<defs>
<linearGradient id="gTeal" x1="0" x2="1" y1="0" y2="1"><stop offset="0" stop-color="#20e6e6"/><stop offset="1" stop-color="#009c9c"/></linearGradient>
<linearGradient id="gTealH" x1="0" x2="1" y1="0" y2="0"><stop offset="0" stop-color="#008a9a"/><stop offset="0.45" stop-color="#35c8d8"/><stop offset="1" stop-color="#006878"/></linearGradient>
<linearGradient id="gGray" x1="0" x2="1" y1="0" y2="0"><stop offset="0" stop-color="#a2a2a2"/><stop offset="1" stop-color="#6c6c6c"/></linearGradient>
<linearGradient id="gGrayV" x1="0" x2="0" y1="0" y2="1"><stop offset="0" stop-color="#b0b0b0"/><stop offset="1" stop-color="#707070"/></linearGradient>
<linearGradient id="gTool" x1="0" x2="1" y1="0" y2="0"><stop offset="0" stop-color="#0d4f74"/><stop offset="0.55" stop-color="#1a7a92"/><stop offset="1" stop-color="#0b4468"/></linearGradient>
<linearGradient id="gMon" x1="0" x2="1" y1="0" y2="1"><stop offset="0" stop-color="#18d8e0"/><stop offset="1" stop-color="#0aa0b0"/></linearGradient>
</defs>
<g transform="translate(0,40) scale(0.125)"><path d="M167,148 L270,148 L270,172 L256,182 L181,182 L167,172 Z" fill="url(#gGrayV)"/><ellipse cx="220" cy="144" rx="17" ry="7" fill="#ff5a28" opacity="0.85"/><path d="M211,102 L230,102 L228,140 L213,140 Z" fill="#e8dc00"/><path d="M189,64 L252,64 L248,94 Q240,108 220,108 Q200,108 193,94 Z" fill="url(#gTealH)"/><path d="M189,66 L197,66 L201,98 L193,92 Z M252,66 L244,66 L240,98 L248,92 Z" fill="#1a4f80"/><ellipse cx="220" cy="60" rx="44" ry="9" fill="#d8d000"/><ellipse cx="220" cy="58.5" rx="38" ry="5.5" fill="#f4f040"/><path d="M489,156 L489,124 Q490,84 528,82 L588,82 Q620,86 620,124 L620,130 L574,130 Q561,140 558,156 Z" fill="#1fb0b0" stroke="#1a4a7a" stroke-width="6" stroke-linejoin="round"/><path d="M492,153 L492,124 Q493,87 528,85 L580,85 Q558,96 555,153 Z" fill="url(#gTeal)"/><path d="M576,138 L612,144 L592,170 Z" fill="#f02020"/><rect x="806" y="76" width="38" height="40" fill="#dfe8f2" stroke="#1f4a78" stroke-width="9"/><path d="M804,54 L804,74 L826,74 M814,52 L814,72" stroke="#f03030" stroke-width="9" fill="none"/><rect x="852" y="76" width="38" height="40" fill="#dfe8f2" stroke="#1f4a78" stroke-width="9"/><path d="M850,54 L850,74 L872,74 M860,52 L860,72" stroke="#f03030" stroke-width="9" fill="none"/><rect x="898" y="76" width="38" height="40" fill="#dfe8f2" stroke="#1f4a78" stroke-width="9"/><path d="M896,54 L896,74 L918,74 M906,52 L906,72" stroke="#f03030" stroke-width="9" fill="none"/><rect x="806" y="142" width="38" height="40" fill="#dfe8f2" stroke="#1f4a78" stroke-width="9"/><path d="M804,120 L804,140 L826,140 M814,118 L814,138" stroke="#f03030" stroke-width="9" fill="none"/><rect x="852" y="142" width="38" height="40" fill="#dfe8f2" stroke="#1f4a78" stroke-width="9"/><path d="M850,120 L850,140 L872,140 M860,118 L860,138" stroke="#f03030" stroke-width="9" fill="none"/><rect x="898" y="142" width="38" height="40" fill="#dfe8f2" stroke="#1f4a78" stroke-width="9"/><path d="M896,120 L896,140 L918,140 M906,118 L906,138" stroke="#f03030" stroke-width="9" fill="none"/></g>
<g transform="translate(120,40) scale(0.125)"><path d="M137,92 L199,114 L199,164 L137,140 Z" fill="#8e8e8e"/><path d="M199,114 L259,92 L259,140 L199,164 Z" fill="#6a6a6a"/><path d="M137,92 L197,72 L259,92 L199,114 Z" fill="#f01010"/><path d="M159,102 L159,148 M179,109 L179,156" stroke="#a8a8a8" stroke-width="4"/><path d="M232,58 L262,72 L236,92 Z" fill="#f02020"/><path d="M446,92 L508,114 L508,164 L446,140 Z" fill="#8e8e8e"/><path d="M508,114 L568,92 L568,140 L508,164 Z" fill="#00d0d0"/><path d="M446,92 L506,72 L568,92 L508,114 Z" fill="#f01010"/><path d="M468,102 L468,148 M488,109 L488,156" stroke="#a8a8a8" stroke-width="4"/><path d="M536,152 L570,160 L548,186 Z" fill="#f02020"/><path d="M748,118 L812,96 L878,118 L814,140 Z" fill="#5cb8b0" stroke="#1f4a78" stroke-width="8" stroke-linejoin="round"/><path d="M748,118 L748,160 L814,180 L878,160 L878,118 M814,140 L814,180" fill="none" stroke="#1f4a78" stroke-width="8" stroke-linejoin="round"/><path d="M785,108 L845,128 M790,128 L840,108" stroke="#c8f0ec" stroke-width="3"/><path d="M846,62 L878,74 L852,96 Z" fill="#f02020"/></g>
<g transform="translate(240,40) scale(0.125)"><path d="M168,70 L196,56 L262,92 L262,150 L236,164 L168,128 Z" fill="#b8b820"/><path d="M168,70 L196,56 L262,92 L236,106 Z" fill="#d8d838"/><path d="M236,106 L262,92 L262,150 L236,164 Z" fill="#909010"/><path d="M146,96 L168,84 L238,122 L238,162 L216,172 L146,134 Z" fill="#18b0b0"/><path d="M146,96 L168,84 L238,122 L216,134 Z" fill="#30d8d8"/><path d="M128,128 L150,114 L222,152 L222,176 L200,186 L128,150 Z" fill="#e81818"/><path d="M128,128 L150,114 L222,152 L200,164 Z" fill="#ff4030"/><circle cx="497" cy="116" r="50" fill="none" stroke="#1f4a78" stroke-width="10"/><path d="M556,52 L556,120 Q552,174 498,176 L432,176" fill="none" stroke="#f03030" stroke-width="9"/><path d="M846,52 L846,100 Q844,146 800,148 L746,148" fill="none" stroke="#1f4a78" stroke-width="10"/><path d="M870,52 L870,104 Q866,172 798,174 L746,174" fill="none" stroke="#f03030" stroke-width="9"/></g>
<g transform="translate(350,40) scale(0.125)"><path d="M130,156 L222,156 Q262,152 262,126 Q262,100 222,98 L180,98" fill="none" stroke="#2a4f9a" stroke-width="9" stroke-linecap="round"/><path d="M152,102 L188,76 L188,128 Z" fill="#1f4a9a"/><path d="M162,102 L182,88 L182,116 Z" fill="#28b0a8"/><rect x="458" y="54" width="130" height="130" fill="#f4f4f6" stroke="#a4a8b4" stroke-width="6"/><path d="M458,184 L458,100 L505,100 Q528,102 532,124 Q536,142 560,144 L588,144 L588,184 Z" fill="#9a9eac"/><path d="M779,52 L779,118 Q782,184 843,186 Q906,184 908,118 L908,52" fill="none" stroke="#f03030" stroke-width="9"/><path d="M800,52 L800,118 Q802,164 843,166 Q886,164 888,118 L888,52" fill="none" stroke="#1f4a78" stroke-width="7"/><path d="M820,52 L820,118 Q822,144 843,146 Q866,144 868,118 L868,52" fill="none" stroke="#f03030" stroke-width="9"/></g>
<g transform="translate(470,40) scale(0.125)"><path d="M162,182 L262,182" stroke="#f03030" stroke-width="10"/><path d="M246,52 L296,52 L296,160 Q292,184 271,186 Q250,184 246,160 Z" fill="url(#gTool)"/><path d="M510,96 Q516,160 578,162 Q640,160 646,110" fill="none" stroke="#1f4a78" stroke-width="8"/><path d="M510,150 Q540,186 578,186 Q618,186 646,150" fill="none" stroke="#f03030" stroke-width="10"/><path d="M530,52 L530,96 Q534,132 578,134 L610,130" fill="none" stroke="#f03030" stroke-width="10"/><path d="M586,52 L634,52 L634,106 Q630,124 610,126 Q590,124 586,106 Z" fill="url(#gTool)"/></g>
<g transform="translate(560,40) scale(0.125)"><path d="M196,89 L279,113 L279,151 L247,161 L238,129 L196,115 Z" fill="#e00808"/><path d="M238,129 L279,141 L279,151 L247,161 Z" fill="#ff2a1a"/><path d="M237,155 L284,147 L284,169 L237,182 Z" fill="#9c9c9c"/><path d="M152,104 L237,128 L237,182 L152,159 Z" fill="#6c6c6c"/><path d="M152,104 L237,128 L237,134 L152,110 Z" fill="#8a8a8a"/><path d="M222,56 L276,56 L276,74 L262,74 L262,134 Q252,142 242,134 L242,74 L222,74 Z" fill="url(#gTool)"/><circle cx="178" cy="72" r="13" fill="#fff" stroke="#1f4a78" stroke-width="8"/><path d="M514,89 L597,113 L597,151 L565,161 L556,129 L514,115 Z" fill="#e00808"/><path d="M556,129 L597,141 L597,151 L565,161 Z" fill="#ff2a1a"/><path d="M555,155 L602,147 L602,169 L555,182 Z" fill="#9c9c9c"/><path d="M470,104 L555,128 L555,182 L470,159 Z" fill="#6c6c6c"/><path d="M470,104 L555,128 L555,134 L470,110 Z" fill="#8a8a8a"/><path d="M546,52 L572,52 L572,134 Q559,144 546,134 Z" fill="url(#gTool)"/><path d="M806,89 L889,113 L889,151 L857,161 L848,129 L806,115 Z" fill="#e00808"/><path d="M848,129 L889,141 L889,151 L857,161 Z" fill="#ff2a1a"/><path d="M847,155 L894,147 L894,169 L847,182 Z" fill="#9c9c9c"/><path d="M762,104 L847,128 L847,182 L762,159 Z" fill="#6c6c6c"/><path d="M762,104 L847,128 L847,134 L762,110 Z" fill="#8a8a8a"/></g>
<g transform="translate(670,40) scale(0.125)"><path d="M216,89 L299,113 L299,151 L267,161 L258,129 L216,115 Z" fill="#e00808"/><path d="M258,129 L299,141 L299,151 L267,161 Z" fill="#ff2a1a"/><path d="M257,155 L304,147 L304,169 L257,182 Z" fill="#9c9c9c"/><path d="M172,104 L257,128 L257,182 L172,159 Z" fill="#6c6c6c"/><path d="M172,104 L257,128 L257,134 L172,110 Z" fill="#8a8a8a"/><path d="M170,112 L216,96 L262,130 L232,146 L170,146 Z" fill="#c8c818"/><path d="M170,112 L216,100 L260,132 L234,140 Z" fill="#b4b410"/><path d="M248,92 Q244,62 268,58 Q288,58 292,72" fill="none" stroke="#f03030" stroke-width="9"/><path d="M280,62 L302,70 L286,86 Z" fill="#f03030"/><rect x="532" y="62" width="130" height="82" rx="4" fill="url(#gMon)" stroke="#1f4a78" stroke-width="8"/><rect x="582" y="146" width="30" height="22" fill="#163a66"/><rect x="546" y="166" width="104" height="12" fill="#163a66"/><circle cx="597" cy="102" r="27" fill="none" stroke="#1f6a98" stroke-width="5"/><circle cx="597" cy="102" r="15" fill="#f02828"/><path d="M592,94 L606,102 L592,110 Z" fill="#ffd0c0"/></g>
<g transform="translate(770,40) scale(0.125)"><path d="M125,158 L112,158 Q86,150 90,122 Q94,100 118,98 Q124,68 152,68 Q176,68 186,92 Q216,94 218,124 Q218,152 192,158 L182,158" fill="#fff" stroke="#1f4a78" stroke-width="8" stroke-linecap="round"/><path d="M126,174 L140,146 L154,174 Z" fill="#28a89c"/><path d="M150,142 L182,142 L166,168 Z" fill="#f02020"/><path d="M420,56 L488,56 L514,82 L514,184 L420,184 Z" fill="url(#gMon)" stroke="#1f4a78" stroke-width="7" stroke-linejoin="round"/><path d="M488,56 L488,82 L514,82" fill="#c8f4f8" stroke="#1f4a78" stroke-width="5"/><text x="467" y="148" font-family="Liberation Sans, sans-serif" font-size="62" font-weight="bold" fill="#164a78" text-anchor="middle">G</text><path d="M706,62 L826,62 L706,182 Z" fill="#fff"/><path d="M706,62 L828,62 M706,62 L706,182 M706,92 L796,92 M706,122 L766,122 M706,152 L736,152 M748,62 L748,140 M790,62 L790,98" fill="none" stroke="#1f4a78" stroke-width="7"/><path d="M706,74 L816,74 L806,84 L706,84 Z" fill="#1f4a78"/><path d="M700,186 L834,52" stroke="#f02020" stroke-width="8"/></g>
<g transform="translate(880,40) scale(0.125)"><rect x="190" y="128" width="130" height="56" fill="#e6eaf0" stroke="#1f4a78" stroke-width="9"/><path d="M214,112 L296,112 Q296,160 255,160 Q214,160 214,112 Z" fill="#e01828"/><text x="256" y="106" font-family="Liberation Serif, serif" font-size="74" font-weight="bold" fill="#1a3f70" text-anchor="middle">R</text></g>
</svg>
<svg class="abs" style="left:0;top:0" width="1024" height="576" viewBox="0 0 1024 576">
<defs>
<linearGradient id="gGrip" x1="0" x2="1" y1="0" y2="0"><stop offset="0" stop-color="#fbfbfd"/><stop offset="0.4" stop-color="#f0f0f6"/><stop offset="0.8" stop-color="#d2d4e2"/><stop offset="1" stop-color="#b2b4cc"/></linearGradient>
<linearGradient id="gTl" x1="0" x2="1" y1="0" y2="1"><stop offset="0" stop-color="#30f0f0"/><stop offset="1" stop-color="#10a0a0"/></linearGradient>
</defs>
<rect x="6" y="95" width="0.9" height="440" fill="#d0d2e4"/>
<rect x="6" y="533.6" width="48" height="4.6" fill="#eceefa"/>
<rect x="6.5" y="95.39999999999999" width="47.5" height="4.2" fill="url(#gGrip)"/><line x1="10" y1="97.6" x2="50" y2="97.6" stroke="#9496aa" stroke-width="0.9" stroke-dasharray="1 1.1"/>
<rect x="6.5" y="240.4" width="47.5" height="4.2" fill="url(#gGrip)"/><line x1="10" y1="242.6" x2="50" y2="242.6" stroke="#9496aa" stroke-width="0.9" stroke-dasharray="1 1.1"/>
<rect x="6.5" y="386.3" width="47.5" height="4.2" fill="url(#gGrip)"/><line x1="10" y1="388.5" x2="50" y2="388.5" stroke="#9496aa" stroke-width="0.9" stroke-dasharray="1 1.1"/>
<rect x="6.5" y="507.7" width="47.5" height="4.2" fill="url(#gGrip)"/><line x1="10" y1="509.9" x2="50" y2="509.9" stroke="#9496aa" stroke-width="0.9" stroke-dasharray="1 1.1"/>
<g transform="translate(0,72) scale(0.125)"><path d="M118,262 Q84,300 112,342 Q126,358 148,356" fill="none" stroke="#1f4a78" stroke-width="11"/><path d="M140,340 L166,356 L142,370 Z" fill="#1f4a78"/><path d="M186,338 Q222,298 192,258 Q178,244 158,246" fill="none" stroke="#f02828" stroke-width="9"/><path d="M166,232 L140,246 L164,262 Z" fill="#f02828"/><path d="M322,318 L280,358" stroke="#1f4a78" stroke-width="26" stroke-linecap="round"/><path d="M318,322 L284,354" stroke="#b8c820" stroke-width="12" stroke-linecap="round"/><circle cx="355" cy="284" r="44" fill="#fff" stroke="#1f4a78" stroke-width="11"/><path d="M355,262 L355,306 M333,284 L377,284" stroke="#f01818" stroke-width="9"/><rect x="90" y="430" width="126" height="126" rx="14" fill="#fff" stroke="#1f4a78" stroke-width="11"/><rect x="115" y="455" width="14" height="14" fill="#2a9a90"/><rect x="146" y="455" width="14" height="14" fill="#2a9a90"/><rect x="177" y="455" width="14" height="14" fill="#2a9a90"/><rect x="115" y="486" width="14" height="14" fill="#2a9a90"/><rect x="146" y="486" width="14" height="14" fill="#2a9a90"/><rect x="177" y="486" width="14" height="14" fill="#2a9a90"/><rect x="115" y="517" width="14" height="14" fill="#2a9a90"/><rect x="146" y="517" width="14" height="14" fill="#2a9a90"/><rect x="177" y="517" width="14" height="14" fill="#2a9a90"/><rect x="246" y="411" width="184" height="173" fill="#d4e5f6" stroke="#86bbee" stroke-width="5"/><rect x="270" y="430" width="128" height="126" rx="14" fill="#d4e5f6" stroke="#1f4a78" stroke-width="11"/><path d="M296,450 L296,530 L378,530" fill="none" stroke="#f02020" stroke-width="9"/><path d="M282,456 L296,438 L310,456 Z M368,516 L388,530 L368,544 Z" fill="#f02020"/></g>
<g transform="translate(0,144) scale(0.125)"><path d="M100,60 L100,160 L205,160" fill="none" stroke="#f02020" stroke-width="9"/><path d="M86,62 L100,40 L114,62 Z M198,146 L220,160 L198,174 Z" fill="#f02020"/><rect x="134" y="84" width="42" height="50" fill="#eef4f2" stroke="#86b8a8" stroke-width="6"/><text x="122" y="78" font-family="Liberation Sans, sans-serif" font-weight="bold" font-size="36" fill="#1f4a78">Y</text><text x="184" y="140" font-family="Liberation Sans, sans-serif" font-weight="bold" font-size="36" fill="#1f4a78">X</text><path d="M282,60 L282,160 L387,160" fill="none" stroke="#f02020" stroke-width="9"/><path d="M268,62 L282,40 L296,62 Z M380,146 L402,160 L380,174 Z" fill="#f02020"/><rect x="316" y="84" width="42" height="50" fill="#eef4f2" stroke="#86b8a8" stroke-width="6"/><text x="304" y="78" font-family="Liberation Sans, sans-serif" font-weight="bold" font-size="36" fill="#1f4a78">Z</text><text x="366" y="140" font-family="Liberation Sans, sans-serif" font-weight="bold" font-size="36" fill="#1f4a78">X</text><path d="M100,250 L100,350 L205,350" fill="none" stroke="#f02020" stroke-width="9"/><path d="M86,252 L100,230 L114,252 Z M198,336 L220,350 L198,364 Z" fill="#f02020"/><rect x="134" y="274" width="42" height="50" fill="#eef4f2" stroke="#86b8a8" stroke-width="6"/><text x="122" y="268" font-family="Liberation Sans, sans-serif" font-weight="bold" font-size="36" fill="#1f4a78">Z</text><text x="184" y="330" font-family="Liberation Sans, sans-serif" font-weight="bold" font-size="36" fill="#1f4a78">Y</text><path d="M270,280 L348,252 L400,268 L400,318 L326,346 L270,326 Z M270,280 L326,298 L400,268 M326,298 L326,346" fill="none" stroke="#1f4a78" stroke-width="10" stroke-linejoin="round"/><path d="M348,252 L348,302 L270,326 M348,302 L400,318" fill="none" stroke="#3a9a90" stroke-width="4"/><rect x="66" y="405" width="179" height="168" fill="#d4e5f6" stroke="#86bbee" stroke-width="5"/><path d="M90,470 L152,442 L216,464 L216,512 L140,536 L90,514 Z" fill="#18b8b8" stroke="#1f4a78" stroke-width="11" stroke-linejoin="round"/><path d="M90,470 L152,442 L216,464 L144,488 Z" fill="#30e8e8" stroke="#1f4a78" stroke-width="7" stroke-linejoin="round"/><path d="M144,488 L216,464 L216,512 L140,536 Z" fill="#2a9888" stroke="#1f4a78" stroke-width="7" stroke-linejoin="round"/><rect x="330" y="436" width="70" height="108" fill="#fff" stroke="#1f4a78" stroke-width="7"/><path d="M346,458 L394,458 M346,476 L394,476 M346,494 L394,494 M346,512 L394,512 M346,530 L394,530" stroke="#1f4a78" stroke-width="5"/><path d="M268,440 L344,424 L344,556 L268,540 Z" fill="#163f72"/><text x="304" y="508" font-family="Liberation Sans, sans-serif" font-weight="bold" font-size="52" fill="#fff" text-anchor="middle">W</text></g>
<g transform="translate(0,216) scale(0.125)"><rect x="100" y="44" width="106" height="126" rx="14" fill="url(#gTl)" stroke="#2a5a8a" stroke-width="8"/><rect x="130" y="38" width="46" height="16" rx="5" fill="#c8d8e0" stroke="#2a5a8a" stroke-width="4"/><path d="M160,138 L190,124 L188,156 Z" fill="#f02020"/><path d="M268,40 L400,40 L400,86 Q382,104 400,122 L400,168 L268,168 L268,122 Q286,104 268,86 Z" fill="url(#gTl)" stroke="#1a4a7a" stroke-width="10" stroke-linejoin="round"/><path d="M320,108 L350,92 L350,124 Z" fill="#f02020"/><path d="M86,380 Q140,356 150,290 Q160,240 184,256 Q200,300 216,272" fill="none" stroke="#8d92a6" stroke-width="10"/><path d="M268,250 L331,250 L331,313 L268,313 L268,300 L274,294 L274,270 L268,264 Z M337,250 L400,250 L400,264 L394,270 L394,294 L400,300 L400,313 L337,313 Z M268,319 L331,319 L331,382 L268,382 L268,368 L274,362 L274,338 L268,332 Z M337,319 L400,319 L400,332 L394,338 L394,362 L400,368 L400,382 L337,382 Z" fill="#959aab"/><path d="M86,506 L218,506" stroke="#8d92a6" stroke-width="10"/><path d="M270,536 Q272,472 335,470 Q398,472 400,536" fill="none" stroke="#8d92a6" stroke-width="10"/></g>
<g transform="translate(0,288) scale(0.125)"><path d="M152,62 L216,184 L90,184 Z" fill="none" stroke="#8d92a6" stroke-width="10" stroke-linejoin="round"/><path d="M140,136 L164,160 M140,160 L164,136" stroke="#8d92a6" stroke-width="7"/><rect x="144" y="140" width="16" height="16" fill="#777c90"/><circle cx="335" cy="120" r="64" fill="none" stroke="#8d92a6" stroke-width="10"/><path d="M88,310 L218,310 M90,292 L90,328 M216,292 L216,328" stroke="#8d92a6" stroke-width="10" fill="none"/><path d="M284,282 L334,258 L384,282 L384,340 L334,366 L284,340 Z M284,282 L334,304 L384,282 M334,304 L334,366" fill="none" stroke="#8d92a6" stroke-width="7" stroke-linejoin="round"/><path d="M272,356 L288,372 M288,356 L272,372 M380,356 L396,372 M396,356 L380,372 M326,250 L342,250" stroke="#8d92a6" stroke-width="3"/><rect x="92" y="438" width="122" height="122" fill="none" stroke="#8d92a6" stroke-width="5"/><rect x="87" y="433" width="10" height="10" fill="#8d92a6"/><rect x="148" y="433" width="10" height="10" fill="#8d92a6"/><rect x="209" y="433" width="10" height="10" fill="#8d92a6"/><rect x="87" y="494" width="10" height="10" fill="#8d92a6"/><rect x="209" y="494" width="10" height="10" fill="#8d92a6"/><rect x="87" y="555" width="10" height="10" fill="#8d92a6"/><rect x="148" y="555" width="10" height="10" fill="#8d92a6"/><rect x="209" y="555" width="10" height="10" fill="#8d92a6"/><text x="153" y="520" font-family="Liberation Serif, serif" font-size="62" fill="#7f8498" text-anchor="middle" textLength="98" lengthAdjust="spacingAndGlyphs">Text</text><path d="M268,438 L400,438 L400,482 L282,482 L282,522 L400,522 L400,566 L268,566" fill="none" stroke="#8d92a6" stroke-width="10"/></g>
<g transform="translate(0,360) scale(0.125)"><rect x="94" y="58" width="32" height="32" fill="#9a9eae"/><rect x="94" y="98" width="32" height="32" fill="#9a9eae"/><rect x="134" y="58" width="32" height="32" fill="#9a9eae"/><rect x="134" y="98" width="32" height="32" fill="#9a9eae"/><rect x="84" y="48" width="94" height="92" fill="none" stroke="#8d92a6" stroke-width="5" stroke-dasharray="10 10"/><path d="M184,148 L216,156 L198,182 Z" fill="#8d92a6"/><path d="M270,184 L270,112 Q274,78 310,76 L384,76" fill="none" stroke="#8d92a6" stroke-width="10"/><path d="M376,54 L402,76 L376,100 Z" fill="#8d92a6"/><rect x="66" y="243" width="179" height="169" fill="#d4e5f6" stroke="#86bbee" stroke-width="5"/><rect x="143" y="318" width="18" height="18" fill="#a8b820" stroke="#4a7a70" stroke-width="3"/><path d="M139,314 L165,340 M139,340 L165,314" stroke="#1f4a78" stroke-width="5"/><rect x="146" y="321" width="12" height="12" fill="#7a9a20"/><rect x="266" y="260" width="92" height="92" fill="none" stroke="#1f4a78" stroke-width="6" stroke-dasharray="12 14"/><rect x="302" y="295" width="20" height="20" fill="#a8b820" stroke="#4a7a70" stroke-width="3"/><path d="M298,291 L326,319 M298,319 L326,291" stroke="#1f4a78" stroke-width="5"/><rect x="306" y="299" width="12" height="12" fill="#7a9a20"/><path d="M362,360 L400,370 L380,394 Z" fill="#f02020"/><path d="M90,580 L136,496 L216,454" fill="none" stroke="#28a098" stroke-width="8"/><rect x="129" y="487" width="18" height="18" fill="#a8b820" stroke="#4a7a70" stroke-width="3"/><path d="M125,483 L151,509 M125,509 L151,483" stroke="#1f4a78" stroke-width="5"/><rect x="132" y="490" width="12" height="12" fill="#7a9a20"/><path d="M100,480 L124,462 L132,494 Z" fill="#f02020"/><path d="M318,517 L400,517" stroke="#1f4a78" stroke-width="11"/><rect x="309" y="508" width="18" height="18" fill="#a8b820" stroke="#4a7a70" stroke-width="3"/><path d="M305,504 L331,530 M305,530 L331,504" stroke="#1f4a78" stroke-width="5"/><rect x="312" y="511" width="12" height="12" fill="#7a9a20"/></g>
<g transform="translate(0,432) scale(0.125)"><path d="M90,106 L218,68 M90,156 L218,196" stroke="#1f4a78" stroke-width="10"/><rect x="143" y="122" width="18" height="18" fill="#a8b820" stroke="#4a7a70" stroke-width="3"/><path d="M139,118 L165,144 M139,144 L165,118" stroke="#1f4a78" stroke-width="5"/><rect x="146" y="125" width="12" height="12" fill="#7a9a20"/><path d="M270,196 L400,68" stroke="#28a098" stroke-width="7"/><path d="M268,130 L400,130" stroke="#1f4a78" stroke-width="10"/><rect x="326" y="121" width="18" height="18" fill="#a8b820" stroke="#4a7a70" stroke-width="3"/><path d="M322,117 L348,143 M322,143 L348,117" stroke="#1f4a78" stroke-width="5"/><rect x="329" y="124" width="12" height="12" fill="#7a9a20"/><path d="M88,322 L218,322" stroke="#1f4a78" stroke-width="10"/><rect x="143" y="313" width="18" height="18" fill="#a8b820" stroke="#4a7a70" stroke-width="3"/><path d="M139,309 L165,335 M139,335 L165,309" stroke="#1f4a78" stroke-width="5"/><rect x="146" y="316" width="12" height="12" fill="#7a9a20"/><circle cx="335" cy="322" r="64" fill="none" stroke="#1f4a78" stroke-width="11"/><rect x="326" y="313" width="18" height="18" fill="#a8b820" stroke="#4a7a70" stroke-width="3"/><path d="M322,309 L348,335 M322,335 L348,309" stroke="#1f4a78" stroke-width="5"/><rect x="329" y="316" width="12" height="12" fill="#7a9a20"/><circle cx="148" cy="515" r="60" fill="none" stroke="#8d92a6" stroke-width="10"/><path d="M205,448 L205,580" stroke="#8d92a6" stroke-width="10"/><rect x="195" y="500" width="20" height="24" fill="#8a8ea0"/><rect x="278" y="455" width="14" height="14" fill="#2a9a90"/><rect x="311" y="455" width="14" height="14" fill="#2a9a90"/><rect x="344" y="455" width="14" height="14" fill="#2a9a90"/><rect x="377" y="455" width="14" height="14" fill="#2a9a90"/><rect x="278" y="488" width="14" height="14" fill="#2a9a90"/><rect x="311" y="488" width="14" height="14" fill="#2a9a90"/><rect x="344" y="488" width="14" height="14" fill="#2a9a90"/><rect x="377" y="488" width="14" height="14" fill="#2a9a90"/><rect x="278" y="521" width="14" height="14" fill="#2a9a90"/><rect x="311" y="521" width="14" height="14" fill="#2a9a90"/><rect x="344" y="521" width="14" height="14" fill="#2a9a90"/><rect x="377" y="521" width="14" height="14" fill="#2a9a90"/><rect x="278" y="554" width="14" height="14" fill="#2a9a90"/><rect x="311" y="554" width="14" height="14" fill="#2a9a90"/><rect x="344" y="554" width="14" height="14" fill="#2a9a90"/><rect x="377" y="554" width="14" height="14" fill="#2a9a90"/><rect x="341" y="519" width="18" height="18" fill="#a8b820" stroke="#4a7a70" stroke-width="3"/><path d="M337,515 L363,541 M337,541 L363,515" stroke="#1f4a78" stroke-width="5"/><rect x="344" y="522" width="12" height="12" fill="#7a9a20"/></g>
<g transform="translate(0,504) scale(0.125)"><path d="M116,132 L184,96 L220,92 L220,166 L150,204 L116,196 Z" fill="#18c0c0" stroke="#163f72" stroke-width="8" stroke-linejoin="round"/><path d="M116,132 L150,140 L220,102 M116,154 L150,162 L220,126 M116,176 L150,184 L220,148 M150,140 L150,204" fill="none" stroke="#163f72" stroke-width="7"/><circle cx="110" cy="166" r="19" fill="none" stroke="#f01818" stroke-width="8"/><rect x="276" y="90" width="52" height="52" fill="#f01818"/><rect x="338" y="90" width="54" height="52" fill="#30f4f4"/><rect x="276" y="152" width="52" height="54" fill="#c8c818"/><rect x="338" y="152" width="54" height="54" fill="#28908a"/><path d="M292,104 L372,184" stroke="#163f72" stroke-width="14" stroke-linecap="round"/><path d="M276,92 L312,128" stroke="#163f72" stroke-width="24" stroke-linecap="round"/><path d="M284,98 L296,110" stroke="#e8f0f8" stroke-width="8" stroke-linecap="round"/></g>
</svg>

</div>
</body></html>
